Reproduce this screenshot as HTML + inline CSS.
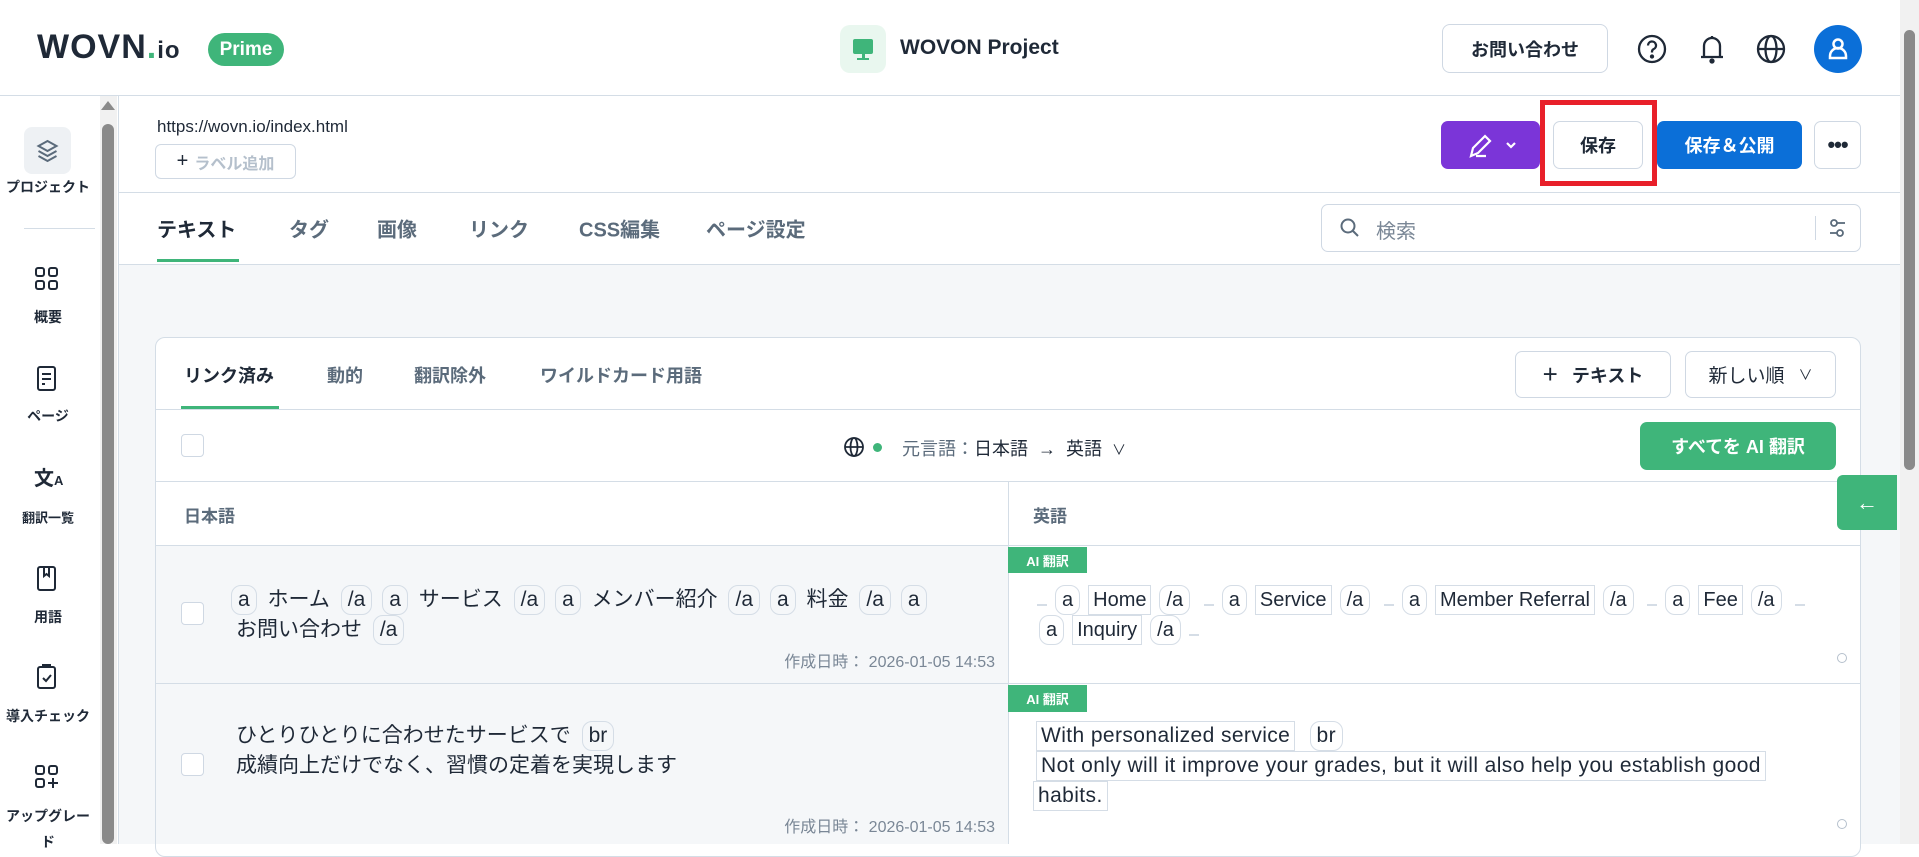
<!DOCTYPE html>
<html><head><meta charset="utf-8"><style>
*{box-sizing:border-box;margin:0;padding:0}
body{width:1919px;height:844px;overflow:hidden;background:#fff;font-family:"Liberation Sans","Noto Sans CJK JP",sans-serif;color:#1f2937;position:relative}
.a{position:absolute}
.btn{position:absolute;border:1px solid #cfd8e3;border-radius:6px;background:#fff;display:flex;align-items:center;justify-content:center;font-weight:bold}
.tab{position:absolute;font-size:20px;color:#5b6b7b;font-weight:bold;transform:translateY(-50%)}
.sl{position:absolute;left:0;width:96px;text-align:center;font-size:14px;font-weight:bold;color:#1f2937;transform:translateY(-50%)}
.si{position:absolute;left:34px}
.t{display:inline-block;border:1px solid #d5dde6;border-radius:10px;padding:0 6px;line-height:28px;margin:0 5px}
.r{display:inline-block;border:1px solid #d5dde6;padding:0 4px;line-height:28px;margin:0 3px}
.row{font-size:21px;line-height:30px;white-space:nowrap}
.date{position:absolute;font-size:16px;color:#7a8796}
.ai{position:absolute;left:1008px;width:79px;background:#3fb57a;color:#fff;font-size:13px;font-weight:bold;display:flex;align-items:center;justify-content:center}
.cb{position:absolute;left:181px;width:23px;height:23px;border:1px solid #cfd8e3;border-radius:4px;background:#fff}
</style></head><body>
<!-- header -->
<div class="a" style="left:37px;top:28px;font-size:34px;font-weight:900;letter-spacing:1px;color:#1f2937">WOVN<span style="color:#3fb57a">.</span><span style="font-size:24px">io</span></div>
<div class="a" style="left:208px;top:33px;width:76px;height:33px;border-radius:17px;background:#3fb57a;color:#fff;font-weight:bold;font-size:19px;display:flex;align-items:center;justify-content:center">Prime</div>
<div class="a" style="left:840px;top:25px;width:46px;height:48px;border-radius:10px;background:#e9f7ef"><svg width="46" height="48"><rect x="13" y="14" width="20" height="15" rx="2" fill="#3fb57a"/><rect x="22" y="29" width="3" height="5" fill="#3fb57a"/><rect x="17" y="33" width="12" height="2" fill="#3fb57a"/></svg></div>
<div class="a" style="left:900px;top:36px;font-size:21px;font-weight:bold;color:#1f2937">WOVON Project</div>
<div class="btn" style="left:1442px;top:24px;width:166px;height:49px;font-size:18px;border-radius:8px">お問い合わせ</div>
<svg class="a" style="left:1636px;top:33px" width="32" height="32" viewBox="0 0 32 32" fill="none" stroke="#1f2937" stroke-width="2.3"><circle cx="16" cy="16" r="13"/><path d="M12 12.5a4 4 0 1 1 5.5 3.7c-1 .5-1.5 1.2-1.5 2.3v1"/><circle cx="16" cy="23.5" r="1" fill="#1f2937"/></svg>
<svg class="a" style="left:1696px;top:32px" width="32" height="34" viewBox="0 0 32 34" fill="none" stroke="#1f2937" stroke-width="2.3"><path d="M8 25V14a8 8 0 0 1 16 0v11M5 25h22"/><circle cx="16" cy="29" r="1.5" fill="#1f2937"/><path d="M16 4v2"/></svg>
<svg class="a" style="left:1755px;top:33px" width="32" height="32" viewBox="0 0 32 32" fill="none" stroke="#1f2937" stroke-width="2.3"><circle cx="16" cy="16" r="13"/><ellipse cx="16" cy="16" rx="5.5" ry="13"/><path d="M3 16h26"/></svg>
<div class="a" style="left:1814px;top:25px;width:48px;height:48px;border-radius:50%;background:#0b6fd8"><svg width="48" height="48" fill="none" stroke="#fff" stroke-width="2.5"><circle cx="24" cy="19" r="4.5"/><path d="M16 33v-2a8 8 0 0 1 16 0v2z"/></svg></div>
<div class="a" style="left:0;top:95px;width:1900px;height:1px;background:#d4dde6"></div>
<!-- right scrollbar -->
<div class="a" style="left:1900px;top:0;width:19px;height:844px;background:#f1f1f1"></div>
<div class="a" style="left:1904px;top:30px;width:11px;height:440px;border-radius:6px;background:#8a8a8a"></div>
<!-- sidebar -->
<div class="a" style="left:118px;top:96px;width:1px;height:748px;background:#d4dde6"></div>
<div class="a" style="left:100px;top:96px;width:17px;height:748px;background:#f1f1f1"></div>
<div class="a" style="left:102px;top:124px;width:12px;height:720px;border-radius:6px;background:#8a8a8a"></div>
<div class="a" style="left:101px;top:101px;width:0;height:0;border-left:7px solid transparent;border-right:7px solid transparent;border-bottom:9px solid #8a8a8a"></div>
<div class="a" style="left:24px;top:127px;width:47px;height:47px;border-radius:8px;background:#eef1f4"><svg width="47" height="47" fill="none" stroke="#5b6b7b" stroke-width="2"><path d="M23.5 14l9 5-9 5-9-5z"/><path d="M14.5 24l9 5 9-5M14.5 29l9 5 9-5"/></svg></div>
<div class="sl" style="top:187px;font-size:14px">プロジェクト</div>
<div class="a" style="left:24px;top:228px;width:71px;height:1px;background:#d4dde6"></div>
<svg class="si" style="top:266px" width="26" height="26" fill="none" stroke="#1f2937" stroke-width="2"><rect x="2" y="2" width="8" height="8" rx="2"/><rect x="15" y="2" width="8" height="8" rx="2"/><rect x="2" y="15" width="8" height="8" rx="2"/><rect x="15" y="15" width="8" height="8" rx="2"/></svg>
<div class="sl" style="top:317px">概要</div>
<svg class="si" style="top:365px" width="26" height="28" fill="none" stroke="#1f2937" stroke-width="2"><rect x="4" y="2" width="17" height="23" rx="2"/><path d="M8 9h9M8 14h9M8 19h3"/></svg>
<div class="sl" style="top:416px">ページ</div>
<div class="si" style="top:462px;font-size:20px;font-weight:bold">文<span style="font-size:13px">A</span></div>
<div class="sl" style="top:517px;font-size:13px">翻訳一覧</div>
<svg class="si" style="top:565px" width="26" height="28" fill="none" stroke="#1f2937" stroke-width="2"><rect x="4" y="2" width="17" height="23" rx="2"/><path d="M10 2v9l2.5-2 2.5 2V2"/></svg>
<div class="sl" style="top:617px">用語</div>
<svg class="si" style="top:663px" width="26" height="28" fill="none" stroke="#1f2937" stroke-width="2"><rect x="4" y="4" width="17" height="21" rx="2"/><path d="M9 4V2h7v2M9 15l3 3 5-6"/></svg>
<div class="sl" style="top:716px">導入チェック</div>
<svg class="si" style="top:764px" width="26" height="26" fill="none" stroke="#1f2937" stroke-width="2"><rect x="2" y="2" width="8" height="8" rx="2"/><rect x="15" y="2" width="8" height="8" rx="2"/><rect x="2" y="15" width="8" height="8" rx="2"/><path d="M19 14v10M14 19h10"/></svg>
<div class="sl" style="top:816px">アップグレー</div>
<div class="sl" style="top:842px">ド</div>
<!-- url bar -->
<div class="a" style="left:157px;top:117px;font-size:17px;color:#1f2937">https://wovn.io/index.html</div>
<div class="btn" style="left:155px;top:144px;width:141px;height:35px;font-size:16px;color:#b5c0cc"><span style="color:#1f2937;font-weight:normal;font-size:20px;margin-right:6px">+</span>ラベル追加</div>
<div class="a" style="left:1441px;top:121px;width:99px;height:48px;border-radius:7px;background:#7b35d8"><svg width="99" height="48" fill="none" stroke="#fff" stroke-width="2.2"><path d="M30 35l2-8 12-12 5 5-12 12-7 3zM35 35h10"/><path d="M66 22l4 4 4-4"/></svg></div>
<div class="btn" style="left:1553px;top:121px;width:90px;height:48px;font-size:18px;border-radius:7px">保存</div>
<div class="a" style="left:1540px;top:100px;width:117px;height:86px;border:5px solid #e8202a"></div>
<div class="a" style="left:1657px;top:121px;width:145px;height:48px;border-radius:7px;background:#0b6fd8;color:#fff;font-size:18px;font-weight:bold;display:flex;align-items:center;justify-content:center">保存＆公開</div>
<div class="btn" style="left:1814px;top:121px;width:47px;height:48px;font-size:22px;border-radius:7px;letter-spacing:-1px">•••</div>
<div class="a" style="left:119px;top:192px;width:1781px;height:1px;background:#d4dde6"></div>
<!-- tabs -->
<div class="tab" style="left:157px;top:228px;color:#1f2937">テキスト</div>
<div class="tab" style="left:289px;top:228px">タグ</div>
<div class="tab" style="left:377px;top:228px">画像</div>
<div class="tab" style="left:469px;top:228px">リンク</div>
<div class="tab" style="left:579px;top:228px">CSS編集</div>
<div class="tab" style="left:706px;top:228px">ページ設定</div>
<div class="a" style="left:157px;top:259px;width:82px;height:3px;background:#3fb57a"></div>
<div class="a" style="left:1321px;top:204px;width:540px;height:48px;border:1px solid #cfd8e3;border-radius:7px;background:#fff"></div>
<svg class="a" style="left:1339px;top:217px" width="22" height="22" fill="none" stroke="#5b6b7b" stroke-width="2"><circle cx="9" cy="9" r="6.5"/><path d="M14 14l5 5"/></svg>
<div class="a" style="left:1376px;top:215px;font-size:20px;color:#7a8796">検索</div>
<div class="a" style="left:1815px;top:216px;width:1px;height:24px;background:#cfd8e3"></div>
<svg class="a" style="left:1827px;top:216px" width="22" height="24" fill="none" stroke="#5b6b7b" stroke-width="1.8"><circle cx="7" cy="7" r="3"/><path d="M10 7h8"/><circle cx="13" cy="17" r="3"/><path d="M3 17h7"/></svg>
<!-- grey area -->
<div class="a" style="left:119px;top:264px;width:1781px;height:580px;background:#f5f7f9;border-top:1px solid #d4dde6"></div>
<div class="a" style="left:155px;top:337px;width:1706px;height:520px;background:#fff;border:1px solid #d4dde6;border-radius:10px"></div>
<div class="tab" style="left:184px;top:375px;font-size:18px;color:#1f2937">リンク済み</div>
<div class="tab" style="left:327px;top:375px;font-size:18px">動的</div>
<div class="tab" style="left:414px;top:375px;font-size:18px">翻訳除外</div>
<div class="tab" style="left:540px;top:375px;font-size:18px">ワイルドカード用語</div>
<div class="a" style="left:181px;top:406px;width:98px;height:3px;background:#3fb57a"></div>
<div class="a" style="left:156px;top:409px;width:1704px;height:1px;background:#d4dde6"></div>
<div class="btn" style="left:1515px;top:351px;width:156px;height:47px;font-size:18px;border-radius:7px"><span style="font-size:26px;font-weight:normal;margin-right:14px">+</span>テキスト</div>
<div class="btn" style="left:1685px;top:351px;width:151px;height:47px;font-size:19px;font-weight:normal;border-radius:7px">新しい順<span style="margin-left:14px;font-size:14px">∨</span></div>
<div class="cb" style="top:434px"></div>
<svg class="a" style="left:843px;top:436px" width="22" height="22" fill="none" stroke="#1f2937" stroke-width="1.8"><circle cx="11" cy="11" r="9"/><ellipse cx="11" cy="11" rx="3.5" ry="9"/><path d="M2 11h18"/></svg>
<div class="a" style="left:873px;top:443px;width:9px;height:9px;border-radius:50%;background:#3fb57a"></div>
<div class="a" style="left:902px;top:435px;font-size:18px;color:#5b6b7b">元言語：<span style="color:#1f2937">日本語 &nbsp;→&nbsp; 英語 &nbsp;<span style="font-size:14px">∨</span></span></div>
<div class="a" style="left:1640px;top:422px;width:196px;height:48px;border-radius:7px;background:#3fb57a;color:#fff;font-weight:bold;font-size:18px;display:flex;align-items:center;justify-content:center">すべてを AI 翻訳</div>
<div class="a" style="left:156px;top:481px;width:1704px;height:1px;background:#d4dde6"></div>
<div class="a" style="left:184px;top:502px;font-size:17px;color:#5b6b7b;font-weight:bold">日本語</div>
<div class="a" style="left:1033px;top:502px;font-size:17px;color:#5b6b7b;font-weight:bold">英語</div>
<div class="a" style="left:1008px;top:481px;width:1px;height:363px;background:#d4dde6"></div>
<div class="a" style="left:156px;top:545px;width:1704px;height:1px;background:#d4dde6"></div>
<div class="a" style="left:1837px;top:475px;width:60px;height:55px;border-radius:6px 0 0 6px;background:#3fb57a;color:#fff;font-size:22px;display:flex;align-items:center;justify-content:center">←</div>
<!-- row1 -->
<div class="a" style="left:156px;top:546px;width:852px;height:137px;background:#f5f7f9"></div>
<div class="cb" style="top:602px"></div>
<div class="a row" style="left:226px;top:585px"><span class="t">a</span> ホーム <span class="t">/a</span><span class="t">a</span> サービス <span class="t">/a</span><span class="t">a</span> メンバー紹介 <span class="t">/a</span><span class="t">a</span> 料金 <span class="t">/a</span><span class="t">a</span><br><span style="margin-left:10px">お問い合わせ</span> <span class="t">/a</span></div>
<div class="date" style="right:924px;top:648px">作成日時： 2026-01-05 14:53</div>
<div class="ai" style="top:547px;height:26px">AI 翻訳</div>
<div class="a row" style="left:1034px;top:585px;font-size:20px"><span class="r"></span><span class="t">a</span><span class="r">Home</span><span class="t">/a</span> <span class="r"></span><span class="t">a</span><span class="r">Service</span><span class="t">/a</span> <span class="r"></span><span class="t">a</span><span class="r">Member Referral</span><span class="t">/a</span> <span class="r"></span><span class="t">a</span><span class="r">Fee</span><span class="t">/a</span> <span class="r"></span><br><span class="t">a</span><span class="r">Inquiry</span><span class="t">/a</span><span class="r"></span></div>
<div class="a" style="left:1837px;top:653px;width:10px;height:10px;border-radius:50%;border:1.5px solid #b5c0cc"></div>
<div class="a" style="left:156px;top:683px;width:1704px;height:1px;background:#d4dde6"></div>
<!-- row2 -->
<div class="a" style="left:156px;top:684px;width:852px;height:160px;background:#f5f7f9"></div>
<div class="cb" style="top:753px"></div>
<div class="a row" style="left:236px;top:721px">ひとりひとりに合わせたサービスで <span class="t">br</span><br>成績向上だけでなく、習慣の定着を実現します</div>
<div class="date" style="right:924px;top:813px">作成日時： 2026-01-05 14:53</div>
<div class="ai" style="top:685px;height:27px">AI 翻訳</div>
<div class="a row" style="left:1033px;top:721px;font-size:21px;letter-spacing:0.4px"><span class="r">With personalized service</span> <span class="t">br</span><br><span class="r">Not only will it improve your grades, but it will also help you establish good</span><br><span class="r" style="margin:0">habits.</span></div>
<div class="a" style="left:1837px;top:819px;width:10px;height:10px;border-radius:50%;border:1.5px solid #b5c0cc"></div>
</body></html>
